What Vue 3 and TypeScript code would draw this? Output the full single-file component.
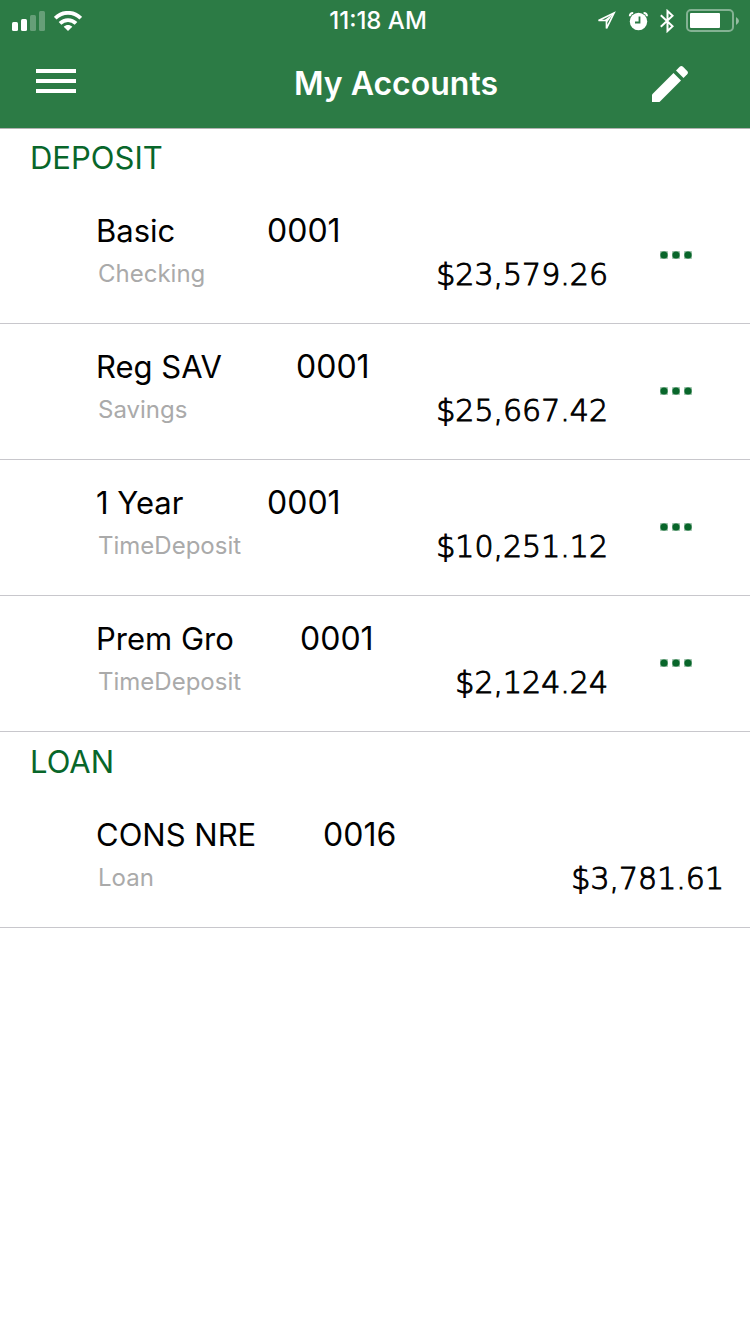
<script setup lang="ts">
interface Account {
  name: string
  number: string
  kind: string
  balance: string
  nameWidth: number
}

interface Section {
  title: string
  hasMenu: boolean
  accounts: Account[]
}

const sections: Section[] = [
  {
    title: 'DEPOSIT',
    hasMenu: true,
    accounts: [
      { name: 'Basic', number: '0001', kind: 'Checking', balance: '$23,579.26', nameWidth: 171 },
      { name: 'Reg SAV', number: '0001', kind: 'Savings', balance: '$25,667.42', nameWidth: 200 },
      { name: '1 Year', number: '0001', kind: 'TimeDeposit', balance: '$10,251.12', nameWidth: 171 },
      { name: 'Prem Gro', number: '0001', kind: 'TimeDeposit', balance: '$2,124.24', nameWidth: 204 },
    ],
  },
  {
    title: 'LOAN',
    hasMenu: false,
    accounts: [
      { name: 'CONS NRE', number: '0016', kind: 'Loan', balance: '$3,781.61', nameWidth: 227 },
    ],
  },
]
</script>

<template>
  <div class="screen">
    <header class="top">
      <div class="status">
        <div class="status-left">
          <svg width="34" height="20" viewBox="0 0 34 20" fill="#fff" aria-hidden="true">
            <rect x="0" y="11" width="6" height="9" rx="1.5" />
            <rect x="9" y="8" width="6" height="12" rx="1.5" />
            <rect x="18" y="4" width="6" height="16" rx="1.5" opacity=".28" />
            <rect x="27" y="0" width="6" height="20" rx="1.5" opacity=".28" />
          </svg>
          <svg width="28" height="20" viewBox="0 0 28 20" aria-hidden="true">
            <g fill="none" stroke="#fff" stroke-width="3.8">
              <path d="M1.200 7.200C8.500 0 19.500 0 26.800 7.200" />
              <path d="M6 12.400C10.600 7.900 17.400 7.900 22 12.400" />
            </g>
            <path d="M14 20l-4.300-4.300c2.500-2.300 6.100-2.300 8.600 0z" fill="#fff" />
          </svg>
        </div>
        <span class="time">11:18 AM</span>
        <div class="status-right">
          <svg width="20" height="20" viewBox="0 0 20 20" aria-hidden="true">
            <path d="M18 2L2.500 9.500H10.500V17.500Z" fill="none" stroke="#fff" stroke-width="1.700" />
            <path d="M18 2L9 8.700L11.300 11Z" fill="#fff" />
          </svg>
          <svg width="20" height="20" viewBox="0 0 20 20" aria-hidden="true">
            <circle cx="10.500" cy="10.500" r="8.700" fill="#fff" />
            <path d="M1.800 5.200Q2 1.800 5.200 2M19 5.200Q18.800 1.800 15.600 2" fill="none" stroke="#fff" stroke-width="2" />
            <path d="M11.500 5.500V11.500H7" fill="none" stroke="#2c7b45" stroke-width="1.800" />
          </svg>
          <svg width="14" height="24" viewBox="0 0 14 24" aria-hidden="true">
            <path d="M.8 6.300L12.600 17.200L7.500 22V2L12.600 6.800L.8 17.700" fill="none" stroke="#fff" stroke-width="2" />
          </svg>
          <svg width="54" height="24" viewBox="0 0 54 24" aria-hidden="true">
            <rect x="1" y="1" width="46" height="21" rx="4" fill="none" stroke="#fff" stroke-width="2" opacity=".42" />
            <rect x="4" y="4" width="30" height="15" rx="1" fill="#fff" />
            <path d="M50 8q6 4 0 8z" fill="#fff" opacity=".5" />
          </svg>
        </div>
      </div>
      <nav class="bar">
        <button type="button" class="icon-button" aria-label="Menu">
          <svg width="40" height="24" viewBox="0 0 40 24" fill="#fff">
            <path d="M0 0h40v4H0zM0 10h40v4H0zM0 20h40v4H0z" />
          </svg>
        </button>
        <h1>My Accounts</h1>
        <button type="button" class="icon-button edit" aria-label="Edit">
          <svg width="36" height="36" viewBox="0 0 36 36" fill="#fff">
            <path d="M0 28.500L21.500 7L29 14.500L7.500 36H0z" />
            <path d="M24 4.500L27.700 .8a2.500 2.500 0 0 1 3.300 0L35.200 5a2.500 2.500 0 0 1 0 3.300L31.500 12z" />
          </svg>
        </button>
      </nav>
    </header>

    <main>
      <section v-for="section in sections" :key="section.title">
        <h2>{{ section.title }}</h2>
        <ul>
          <li v-for="account in section.accounts" :key="account.name">
            <div class="details">
              <div class="line">
                <span class="name" :style="{ minWidth: account.nameWidth + 'px' }">{{ account.name }}</span>
                <span class="number">{{ account.number }}</span>
              </div>
              <div class="line second">
                <span class="kind">{{ account.kind }}</span>
                <span class="balance">{{ account.balance }}</span>
              </div>
            </div>
            <button v-if="section.hasMenu" type="button" class="more" :aria-label="'Options for ' + account.name">
              <svg width="32" height="8" viewBox="0 0 32 8">
                <g fill="#08662a" opacity=".4">
                  <rect width="8" height="8" rx="1" />
                  <rect x="12" width="8" height="8" rx="1" />
                  <rect x="24" width="8" height="8" rx="1" />
                </g>
                <g fill="#08662a">
                  <circle cx="4" cy="4" r="3.600" />
                  <circle cx="16" cy="4" r="3.600" />
                  <circle cx="28" cy="4" r="3.600" />
                </g>
              </svg>
            </button>
          </li>
        </ul>
      </section>
    </main>
  </div>
</template>

<style>
body {
  margin: 0;
  background: #fff;
}
</style>

<style scoped>
.screen {
  min-height: 100vh;
  background: #fff;
  color: #000;
  font-family: Inter, "Liberation Sans", sans-serif;
}

svg {
  display: block;
}

button {
  padding: 0;
  border: 0;
  background: none;
  cursor: pointer;
}

.top {
  position: relative;
  background: #2c7b45;
  color: #fff;
  box-shadow: 0 1px #b2b2b2;
}

.status {
  display: grid;
  grid-template-columns: 1fr auto 1fr;
  align-items: center;
  box-sizing: border-box;
  height: 40px;
  padding: 2px 10px 0 12px;
}

.status-left,
.status-right {
  display: flex;
  align-items: center;
}

.status-left {
  gap: 8px;
}

.status-right {
  justify-content: flex-end;
  gap: 12px;
}

.time {
  padding-left: 4px;
  font-size: 24px;
  font-weight: 500;
  line-height: 38px;
}

.bar {
  display: grid;
  grid-template-columns: 1fr auto 1fr;
  align-items: center;
  height: 88px;
  padding: 0 62px 0 36px;
}

.icon-button {
  justify-self: start;
  padding-bottom: 6px;
}

.edit {
  justify-self: end;
  padding-bottom: 0;
}

h1 {
  margin: 0 0 0 68px;
  font-size: 32px;
  font-weight: 600;
  line-height: 88px;
}

h2 {
  margin: 0;
  padding: 0 30px;
  color: #08662a;
  font-size: 31px;
  font-weight: 400;
  line-height: 60px;
}

ul {
  margin: 0;
  padding: 0;
  list-style: none;
}

li {
  display: flex;
  align-items: flex-start;
  box-sizing: border-box;
  min-height: 136px;
  padding: 20px 26px 20px 96px;
  border-bottom: 1px solid #c8c7cc;
}

.details {
  flex: 1;
}

.line {
  display: flex;
  align-items: baseline;
  font-size: 31px;
  line-height: 46px;
}

.number {
  font-size: 32px;
}

.second {
  align-items: center;
  justify-content: space-between;
  line-height: 40px;
}

.kind {
  padding-left: 2px;
  color: #aaa;
  font-size: 24px;
}

.balance {
  padding-top: 2px;
  font-family: "DejaVu Sans", sans-serif;
  font-size: 30px;
  font-weight: 200;
  line-height: 38px;
  -webkit-text-stroke: 1px #000;
}

.more {
  width: 84px;
  padding: 43px 0 43px 52px;
  margin-right: 32px;
}
</style>
